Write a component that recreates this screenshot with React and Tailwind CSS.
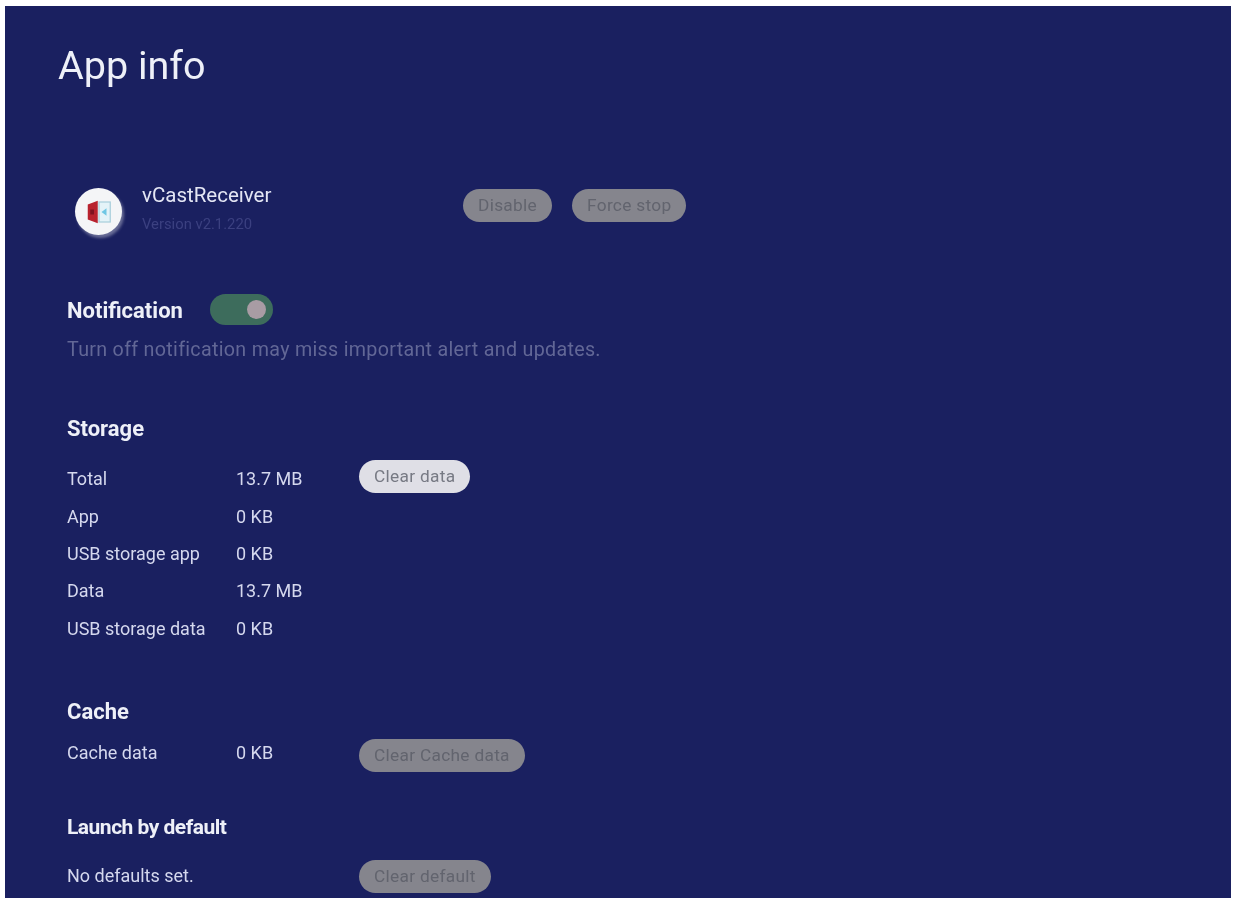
import React from 'react';

const storageRows = [
    { label: 'Total', value: '13.7 MB' },
    { label: 'App', value: '0 KB' },
    { label: 'USB storage app', value: '0 KB' },
    { label: 'Data', value: '13.7 MB' },
    { label: 'USB storage data', value: '0 KB' },
];

function PillButton({ children, active }) {
    return (
        <button
            className={`h-[33px] rounded-full px-[15px] text-[17.3px] leading-none tracking-[0.3px] whitespace-nowrap ${
                active ? 'bg-[#dfdfe6] text-[#777a84]' : 'bg-[#85858d] text-[#62646e]'
            }`}
        >
            {children}
        </button>
    );
}

function AppIcon() {
    return (
        <div className="flex h-[47px] w-[47px] items-center justify-center rounded-full bg-[#f4f5f7] shadow-[2px_3px_3px_rgba(255,255,255,0.35)]">
            <svg width="30" height="30" viewBox="0 0 24 24">
                <rect x="12" y="4" width="9" height="16" fill="#e4f3f8" stroke="#a9cfdc" strokeWidth="1" />
                <path d="M3 6 L11 3 V21 L3 18 Z" fill="#b8222e" />
                <rect x="5" y="10" width="3" height="4" fill="#7e1220" />
                <path d="M14 12 L18 9 V15 Z" fill="#6fc7e4" />
            </svg>
        </div>
    );
}

export default function App() {
    return (
        <div className="h-[898px] w-[1234px] overflow-hidden bg-white pt-[6px] pr-[3px] pl-[5px] font-['Roboto',sans-serif]">
            <div className="h-[892px] overflow-hidden bg-[#1a2060] pt-[34px] pl-[62px] text-[#d5d8ee] blur-[0.5px]">
                <h1 className="-ml-[9px] text-[39.5px] leading-[52px] font-normal text-[#eef0f8]">App info</h1>

                <div className="mt-[92px] flex">
                    <div className="mt-[4px] ml-[8px]">
                        <AppIcon />
                    </div>
                    <div className="ml-[20px] w-[321px]">
                        <div className="text-[20.5px] leading-[22px] text-[#e4e6f4]">vCastReceiver</div>
                        <div className="mt-[9px] text-[14.8px] leading-[18px] text-[#3b4080]">Version v2.1.220</div>
                    </div>
                    <div className="mt-[5px] flex gap-[20px]">
                        <PillButton>Disable</PillButton>
                        <PillButton>Force stop</PillButton>
                    </div>
                </div>

                <div className="mt-[58px] flex items-center">
                    <h2 className="pt-[4px] text-[22px] leading-[28px] font-bold text-[#eef0f8]">Notification</h2>
                    <div className="ml-[27px] flex h-[31px] w-[63px] items-center justify-end rounded-full bg-[#3d6c5c] pr-[7px]">
                        <div className="h-[19px] w-[19px] rounded-full bg-[#a89ca4]" />
                    </div>
                </div>
                <p className="mt-[12px] text-[19.7px] leading-[26px] tracking-[0.3px] text-[#626796]">
                    Turn off notification may miss important alert and updates.
                </p>

                <h2 className="mt-[53px] text-[22px] leading-[26px] font-bold text-[#eef0f8]">Storage</h2>
                <div className="relative mt-[18px]">
                    {storageRows.map((row) => (
                        <div key={row.label} className="flex h-[37.4px] items-center text-[18px]">
                            <span className="w-[169px]">{row.label}</span>
                            <span>{row.value}</span>
                        </div>
                    ))}
                    <div className="absolute top-0 left-[292px]">
                        <PillButton active>Clear data</PillButton>
                    </div>
                </div>

                <h2 className="mt-[52px] text-[22px] leading-[26px] font-bold text-[#eef0f8]">Cache</h2>
                <div className="mt-[14px] flex h-[34px] items-center text-[18px]">
                    <span className="mb-[7px] w-[169px]">Cache data</span>
                    <span className="mb-[7px] w-[123px]">0 KB</span>
                    <PillButton>Clear Cache data</PillButton>
                </div>

                <h2 className="mt-[41px] text-[21px] leading-[26px] font-bold tracking-[-0.5px] text-[#eef0f8]">Launch by default</h2>
                <div className="mt-[20px] flex h-[34px] items-center text-[18px]">
                    <span className="mb-[2px] w-[292px]">No defaults set.</span>
                    <PillButton>Clear default</PillButton>
                </div>
            </div>
        </div>
    );
}
